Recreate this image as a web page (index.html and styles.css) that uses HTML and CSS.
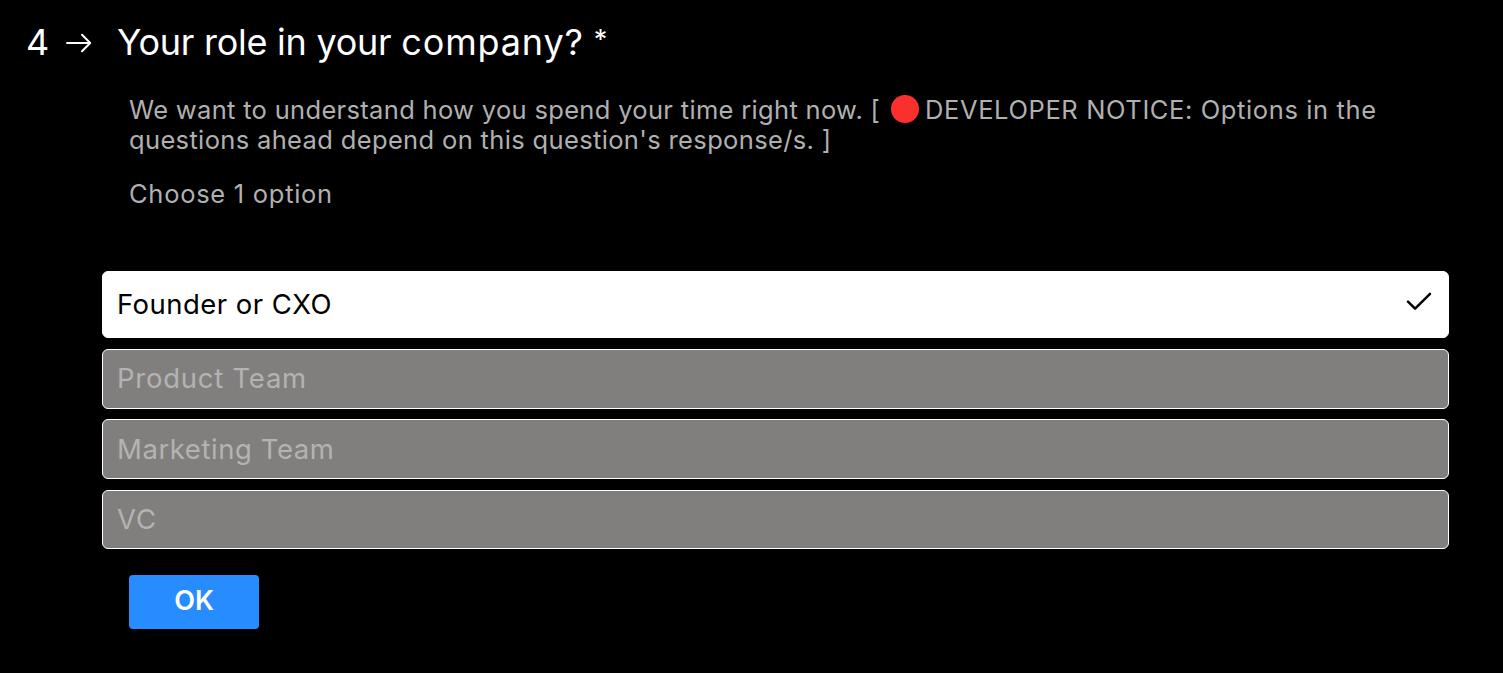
FILE: index.html
```
<!DOCTYPE html>
<html lang="en">
<head>
<meta charset="utf-8">
<title>Your role in your company?</title>
<link rel="stylesheet" href="styles.css">
</head>
<body>
<main class="question">
  <header class="heading">
    <span class="number">4</span>
    <svg class="arrow" width="26" height="20" viewBox="0 0 26 20"><path d="M1 10H24M16 1.8L24.2 10L16 18.2"/></svg>
    <h1 class="title">Your role in your <span class="company">company?</span> <span class="star">*</span></h1>
  </header>
  <div class="description">
    <p class="line"><span class="lead">We want to understand how you spend your time right now. [</span><span class="dot"></span><span class="notice">DEVELOPER NOTICE: Options in the</span></p>
    <p class="line"><span class="rest">questions ahead depend on this question's response/s. ]</span></p>
  </div>
  <p class="hint">Choose 1 option</p>
  <div class="options">
    <div class="option selected"><span class="founder">Founder or CXO</span>
      <svg class="check" width="26" height="20" viewBox="0 0 26 20"><path d="M2 9.7L9.1 16.7L24 1.8"/></svg>
    </div>
    <div class="option product"><span class="product-text">Product Team</span></div>
    <div class="option"><span class="marketing">Marketing Team</span></div>
    <div class="option last"><span class="vc">VC</span></div>
  </div>
  <button class="ok">OK</button>
</main>
</body>
</html>
```
FILE: styles.css
```
* { box-sizing: border-box; }
body { margin: 0; background: #000; color: #fff; font-family: Inter, "Liberation Sans", sans-serif; font-weight: 400; }
h1, p { margin: 0; font-weight: inherit; }
.question { height: 673px; padding: 20px 54px 0 26px; white-space: nowrap; overflow: hidden; }
.heading { display: flex; height: 44px; line-height: 44px; font-size: 36px; }
.number { width: 40px; }
.arrow { margin-top: 13px; fill: none; stroke: #fff; stroke-width: 2; stroke-linecap: round; stroke-linejoin: round; }
.title { margin-left: 25px; font-size: 36px; letter-spacing: -0.25px; }
.company { letter-spacing: 0.85px; }
.star { font-size: 27px; line-height: 1; vertical-align: 6px; }
.description { margin: 31px 0 0 103px; }
.description, .hint { font-size: 25.5px; line-height: 30px; color: #b0b0b0; }
.line { display: flex; height: 30px; }
.lead { width: 762px; letter-spacing: 0.32px; }
.notice { letter-spacing: 0.61px; }
.rest { letter-spacing: 0.35px; }
.dot { width: 28px; height: 28px; margin: 0 6px 0 0; border-radius: 50%; background: #fb302e; }
.hint { margin: 24px 0 0 103px; letter-spacing: 0.72px; }
.options { display: flex; flex-direction: column; margin: 62px 0 0 76px; }
.option { display: flex; align-items: center; justify-content: space-between; height: 60px; margin-bottom: 10px; padding: 0 16px 0 14px; border: 1px solid #fff; border-radius: 6px; background: #817f7d; color: #b3b3b3; font-size: 27.5px; line-height: 36px; }
.selected { height: 67px; margin-bottom: 11px; padding-bottom: 2px; background: #fff; color: #000; }
.founder { letter-spacing: 0.47px; }
.product { padding-bottom: 2px; }
.product-text { letter-spacing: 0.75px; }
.marketing { letter-spacing: 0.57px; }
.vc { letter-spacing: 1px; }
.last { height: 59px; margin: 1px 0 0; padding-bottom: 2px; }
.check { margin-bottom: 4px; fill: none; stroke: #000; stroke-width: 2.5; stroke-linecap: round; stroke-linejoin: round; }
.ok { display: flex; align-items: center; justify-content: center; width: 130px; height: 54px; margin: 26px 0 0 103px; padding: 0 0 2px; border: 0; border-radius: 4px; background: #278cff; color: #fff; font: 600 27px/36px Inter, "Liberation Sans", sans-serif; }
```
